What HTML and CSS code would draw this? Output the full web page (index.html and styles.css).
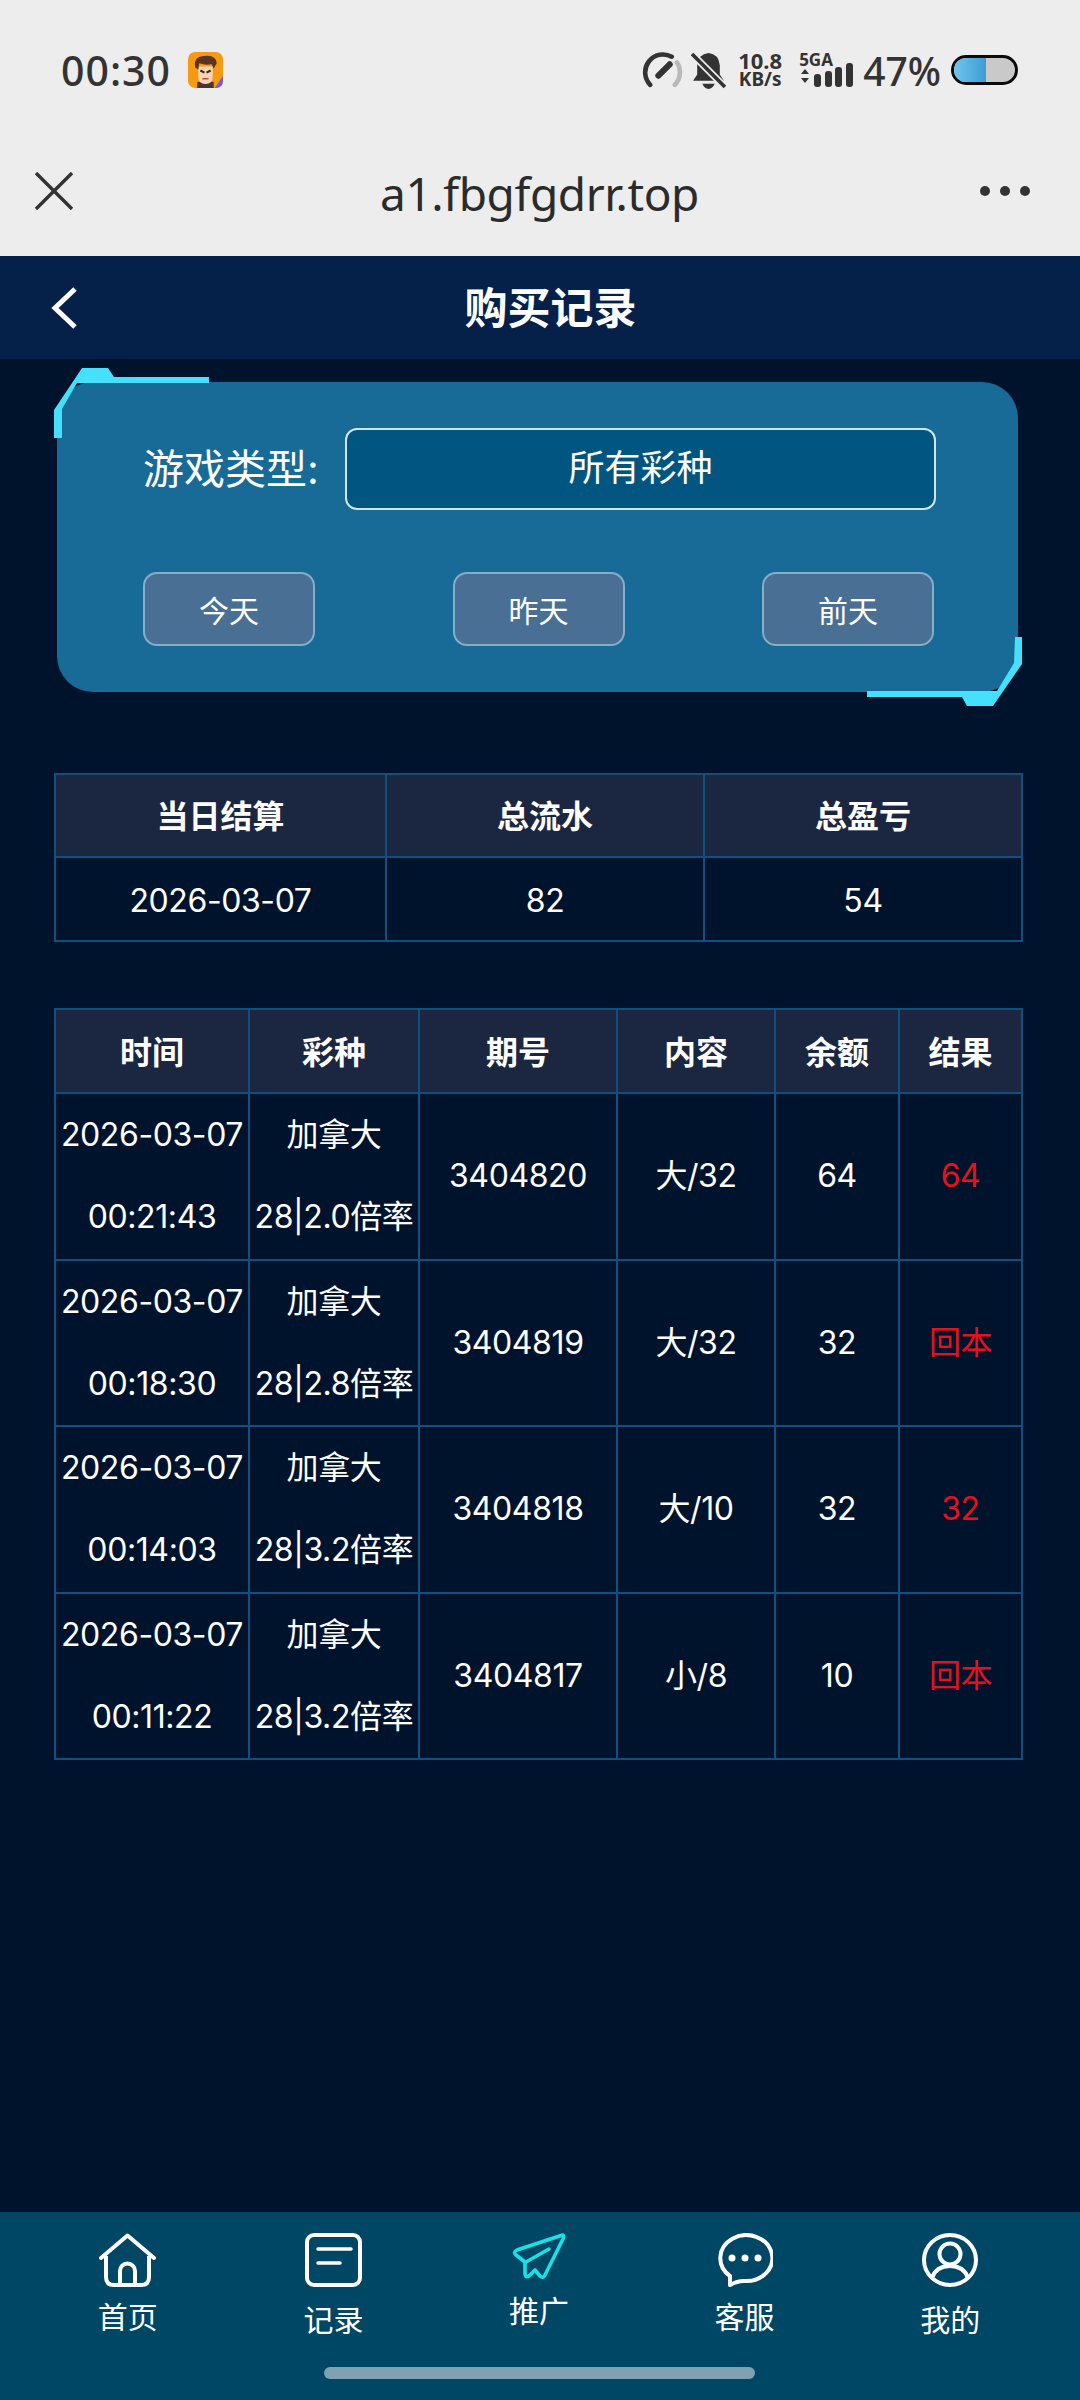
FILE: index.html
```html
<!DOCTYPE html>
<html lang="zh-CN">
<head>
    <meta charset="UTF-8">
    <meta name="viewport" content="width=device-width, initial-scale=1.0">
    <title>购买记录</title>
    <link rel="stylesheet" href="styles.css">
</head>
<body>
    <div class="page">
        <!-- phone status bar -->
        <div class="status-bar">
            <span class="clock">00:30</span>
            <svg class="app-badge" viewBox="0 0 34 35">
                <rect width="34" height="35" rx="7" fill="#f59a12"/>
                <path d="M26 35 L34 23 V28 Q34 35 27 35Z" fill="#7a5bd6"/>
                <path d="M9 35 V29 H25 V35Z" fill="#4a3430"/>
                <path d="M10 14 H24 V24 Q24 31 17 31 Q10 31 10 24Z" fill="#f7d3b5"/>
                <path d="M7 15 Q5 5 15 4 Q27 2 28 11 L25 16 L23 12 Q16 13 11 11 L10 17Z" fill="#5a3524"/>
                <path d="M12 18 L16 20 M22 18 L18 20" stroke="#3a221a" stroke-width="2"/>
                <path d="M14 26 H20" stroke="#a8553f" stroke-width="1.5"/>
            </svg>
            <div class="status-right">
                <svg class="gauge" viewBox="0 0 40 35">
                    <path d="M8 32 A17.5 17.5 0 0 1 29 4.5" fill="none" stroke="#333" stroke-width="4.5" stroke-linecap="round"/>
                    <path d="M34 10 A17.5 17.5 0 0 1 32 32" fill="none" stroke="#b9b9b9" stroke-width="4.5" stroke-linecap="round"/>
                    <path d="M16 23 L27 12" stroke="#333" stroke-width="6" stroke-linecap="round"/>
                </svg>
                <svg class="bell" viewBox="0 0 34 36">
                    <path d="M17 1 Q27 2 28 13 V22 L32 28 H2 L6 22 V13 Q7 2 17 1Z" fill="#333"/>
                    <path d="M11 31 H23 Q21 36 17 36 Q13 36 11 31Z" fill="#333"/>
                    <path d="M1 2 L33 34" stroke="#ededed" stroke-width="7"/>
                    <path d="M1 2 L33 34" stroke="#333" stroke-width="3.5"/>
                </svg>
                <div class="speed"><span>10.8</span><span>KB/s</span></div>
                <div class="signal">
                    <span class="net">5GA</span>
                    <svg viewBox="0 0 54 25" class="bars">
                        <path d="M6 6 L10 11 H2Z M6 20 L2 15 H10Z" fill="#333"/>
                        <rect x="15" y="11" width="7" height="13" rx="3" fill="#333"/>
                        <rect x="26" y="8" width="7" height="16" rx="3" fill="#333"/>
                        <rect x="36" y="4" width="7" height="20" rx="3" fill="#333"/>
                        <rect x="47" y="0" width="7" height="24" rx="3" fill="#333"/>
                    </svg>
                </div>
                <span class="percent">47%</span>
                <div class="battery"><div class="battery-fill"></div></div>
            </div>
        </div>

        <!-- browser bar -->
        <div class="address-bar">
            <svg class="close-icon" viewBox="0 0 38 38">
                <path d="M1 1 L37 37 M37 1 L1 37" stroke="#333" stroke-width="3.4"/>
            </svg>
            <div class="address">a1.fbgfgdrr.top</div>
            <div class="more"><i></i><i></i><i></i></div>
        </div>

        <div class="page-header">
            <svg class="back-icon" viewBox="0 0 26 42">
                <path d="M24 2 L4 21 L24 40" fill="none" stroke="#fff" stroke-width="5"/>
            </svg>
            <h2>购买记录</h2>
        </div>

        <div class="content">
            <div class="filter-card">
                <svg class="corner corner-tl" viewBox="0 0 156 71">
                    <path d="M0 43 L28 1 H54 L60 10 H155 V16 H23 L8 42 V71 H0Z" fill="#45e0fb"/>
                </svg>
                <svg class="corner corner-br" viewBox="0 0 156 70">
                    <path d="M148 0 H155 V27 L126 69 H100 L95 60 H0 V54 H130 L147 26Z" fill="#45e0fb"/>
                </svg>
                <div class="filter-row">
                    <label>游戏类型:</label>
                    <div class="select">所有彩种</div>
                </div>
                <div class="day-buttons">
                    <button>今天</button>
                    <button>昨天</button>
                    <button>前天</button>
                </div>
            </div>

            <table class="summary">
                <tr><th>当日结算</th><th>总流水</th><th>总盈亏</th></tr>
                <tr><td>2026-03-07</td><td>82</td><td>54</td></tr>
            </table>

            <table class="records">
                <tr><th>时间</th><th>彩种</th><th>期号</th><th>内容</th><th>余额</th><th>结果</th></tr>
                <tr>
                    <td>2026-03-07<br>00:21:43</td><td>加拿大<br>28|2.0倍率</td><td>3404820</td><td>大/32</td><td>64</td><td class="result">64</td>
                </tr>
                <tr>
                    <td>2026-03-07<br>00:18:30</td><td>加拿大<br>28|2.8倍率</td><td>3404819</td><td>大/32</td><td>32</td><td class="result">回本</td>
                </tr>
                <tr>
                    <td>2026-03-07<br>00:14:03</td><td>加拿大<br>28|3.2倍率</td><td>3404818</td><td>大/10</td><td>32</td><td class="result">32</td>
                </tr>
                <tr>
                    <td>2026-03-07<br>00:11:22</td><td>加拿大<br>28|3.2倍率</td><td>3404817</td><td>小/8</td><td>10</td><td class="result">回本</td>
                </tr>
            </table>
        </div>

        <div class="tabbar">
            <div class="tabs">
                <div class="tab">
                    <svg class="tab-icon icon-home" viewBox="0 0 57 54">
                        <path d="M2 25 L28.5 2.5 L55 25" fill="none" stroke="#fff" stroke-width="4" stroke-linecap="round" stroke-linejoin="round"/>
                        <path d="M7 23 V44 Q7 52 15 52 H42 Q50 52 50 44 V23" fill="none" stroke="#fff" stroke-width="4"/>
                        <path d="M21 52 V38 A7.5 7.5 0 0 1 36 38 V52" fill="none" stroke="#fff" stroke-width="4"/>
                    </svg>
                    <span>首页</span>
                </div>
                <div class="tab">
                    <svg class="tab-icon icon-record" viewBox="0 0 57 54">
                        <rect x="2" y="2" width="53" height="50" rx="7" fill="none" stroke="#fff" stroke-width="4"/>
                        <path d="M13 16 H46 M13 30 H35" stroke="#fff" stroke-width="3.5" stroke-linecap="round"/>
                    </svg>
                    <span>记录</span>
                </div>
                <div class="tab">
                    <svg class="tab-icon icon-plane" viewBox="0 0 54 47">
                        <path d="M49 2.5 L5 17 Q1 19 4 22 L13 29 L13 41 Q14 46 18 42 L23 37 L28 43 Q31 46 33 42 L51 6 Q53 1 49 2.5Z" fill="none" stroke="#17e2e6" stroke-width="3.6" stroke-linejoin="round"/>
                        <path d="M37 16 L14 29" fill="none" stroke="#17e2e6" stroke-width="3.4" stroke-linecap="round"/>
                    </svg>
                    <span>推广</span>
                </div>
                <div class="tab">
                    <svg class="tab-icon icon-chat" viewBox="0 0 56 54">
                        <path d="M13 52 L13 43 A26 23 0 1 1 27 48 Q20 48 13 52Z" fill="none" stroke="#fff" stroke-width="4" stroke-linejoin="round"/>
                        <circle cx="15" cy="25" r="3.5" fill="#fff"/>
                        <circle cx="28" cy="25" r="3.5" fill="#fff"/>
                        <circle cx="41" cy="25" r="3.5" fill="#fff"/>
                    </svg>
                    <span>客服</span>
                </div>
                <div class="tab">
                    <svg class="tab-icon icon-user" viewBox="0 0 56 54">
                        <ellipse cx="28" cy="27" rx="26" ry="25" fill="none" stroke="#fff" stroke-width="4"/>
                        <circle cx="28" cy="21" r="10.5" fill="none" stroke="#fff" stroke-width="4"/>
                        <path d="M10 45 Q14 33 28 33 Q42 33 46 45" fill="none" stroke="#fff" stroke-width="4"/>
                    </svg>
                    <span>我的</span>
                </div>
            </div>
            <div class="home-indicator"></div>
        </div>
    </div>
</body>
</html>
```

FILE: styles.css
```css
* {
    box-sizing: border-box;
}

body {
    margin: 0;
    font-family: Inter, "Noto Sans CJK SC", sans-serif;
    background-color: #00132c;
    color: #fff;
}

.page {
    display: flex;
    flex-direction: column;
    width: 1080px;
    height: 2400px;
    overflow: hidden;
}

/* status bar */
.status-bar {
    display: flex;
    align-items: center;
    height: 140px;
    padding: 0 62px 0 61px;
    background-color: #ededed;
    color: #333;
}

.clock {
    font-family: "Noto Sans", sans-serif;
    font-size: 41px;
    font-weight: 500;
    letter-spacing: 1px;
}

.app-badge {
    width: 35px;
    height: 36px;
    margin-left: 17px;
}

.status-right {
    display: flex;
    align-items: center;
    margin-left: auto;
}

.gauge {
    width: 41px;
    height: 36px;
}

.bell {
    width: 35px;
    height: 37px;
    margin-left: 8px;
}

.speed {
    display: flex;
    flex-direction: column;
    align-items: center;
    margin-left: 12px;
    font-family: "Noto Sans", sans-serif;
    font-weight: 700;
    font-size: 22px;
    line-height: 19px;
}

.speed span:last-child {
    font-size: 19px;
}

.signal {
    display: flex;
    flex-direction: column;
    margin-left: 17px;
}

.net {
    font-family: "Noto Sans", sans-serif;
    font-size: 17px;
    font-weight: 700;
    line-height: 15px;
}

.bars {
    width: 54px;
    height: 25px;
    margin-top: -4px;
}

.percent {
    margin-left: 10px;
    font-family: "Noto Sans", sans-serif;
    font-size: 39px;
    font-weight: 500;
}

.battery {
    position: relative;
    width: 67px;
    height: 30px;
    margin-left: 10px;
    border: 3px solid #0a0a0a;
    border-radius: 15px;
    background-color: #c9c9c9;
    overflow: hidden;
}

.battery-fill {
    width: 53%;
    height: 100%;
    background: linear-gradient(90deg, #72c4ee, #3c9dd3);
}

/* browser bar */
.address-bar {
    display: flex;
    align-items: center;
    height: 116px;
    padding: 0 50px 14px 35px;
    background-color: #ededed;
    color: #2b2b2b;
}

.close-icon {
    width: 38px;
    height: 38px;
    margin-right: 26px;
}

.address {
    flex: 1;
    margin-top: 3px;
    text-align: center;
    font-family: "Noto Sans", sans-serif;
    font-size: 46px;
    letter-spacing: -0.4px;
}

.more {
    display: flex;
    gap: 10px;
}

.more i {
    width: 10px;
    height: 10px;
    border-radius: 50%;
    background-color: #333;
}

/* page header */
.page-header {
    display: flex;
    align-items: center;
    height: 103px;
    padding: 0 56px 0 51px;
    background-color: #05214a;
}

.back-icon {
    width: 26px;
    height: 42px;
}

.page-header h2 {
    flex: 1;
    margin: 0;
    padding-bottom: 6px;
    text-align: center;
    font-size: 43px;
    font-weight: 700;
}

.content {
    flex: 1;
    padding: 23px 57px 0 54px;
}

/* filter card */
.filter-card {
    position: relative;
    width: 961px;
    height: 310px;
    margin-left: 3px;
    padding: 46px 82px 0 86px;
    background-color: #186b96;
    border-radius: 36px;
}

.corner {
    position: absolute;
    width: 156px;
}

.corner-tl {
    left: -3px;
    top: -15px;
    height: 71px;
}

.corner-br {
    right: -5px;
    bottom: -15px;
    height: 70px;
}

.filter-row {
    display: flex;
    align-items: center;
}

.filter-row label {
    width: 202px;
    padding-bottom: 6px;
    font-size: 41px;
    white-space: nowrap;
}

.select {
    flex: 1;
    height: 82px;
    line-height: 76px;
    text-align: center;
    font-size: 36px;
    background-color: #005680;
    border: 2px solid #cfe6f2;
    border-radius: 12px;
}

.day-buttons {
    display: flex;
    justify-content: space-between;
    margin-top: 62px;
    padding-right: 2px;
}

.day-buttons button {
    width: 172px;
    height: 74px;
    color: #fff;
    font-family: inherit;
    font-size: 30px;
    background-color: #4a6f94;
    border: 2px solid #84aeca;
    border-radius: 14px;
}

/* tables */
table {
    width: 969px;
    border-collapse: collapse;
    table-layout: fixed;
    font-size: 32px;
    letter-spacing: -0.4px;
    text-align: center;
}

th, td {
    padding: 0;
    border: 2px solid #10507c;
    white-space: nowrap;
}

th {
    height: 84px;
    padding-bottom: 3px;
    font-size: 32px;
    letter-spacing: 0;
    font-weight: 700;
    background-color: #1b2640;
}

.summary {
    margin-top: 81px;
}

.summary th {
    height: 83px;
}

.summary td {
    height: 84px;
    padding-top: 2px;
}

.summary th:nth-child(1) {
    width: 331px;
}

.summary th:nth-child(2) {
    width: 318px;
}

.records {
    margin-top: 66px;
}

.records td {
    height: 166.5px;
    line-height: 82px;
}

.records th:nth-child(1) {
    width: 194px;
}

.records th:nth-child(2) {
    width: 170px;
}

.records th:nth-child(3) {
    width: 198px;
}

.records th:nth-child(4) {
    width: 158px;
}

.records th:nth-child(5) {
    width: 124px;
}

.result {
    color: #e8101c;
}

/* bottom tabs */
.tabbar {
    height: 188px;
    padding: 21px 27px 0 25px;
    background-color: #004766;
}

.tabs {
    display: flex;
    height: 134px;
}

.tab {
    display: flex;
    flex: 1;
    flex-direction: column;
    align-items: center;
    font-size: 30px;
    line-height: 36px;
}

.tab-icon {
    display: block;
    margin-bottom: 12px;
}

.icon-home {
    width: 57px;
    height: 54px;
}

.icon-record {
    width: 57px;
    height: 54px;
    margin-bottom: 15px;
}

.icon-plane {
    width: 54px;
    height: 47px;
    margin-bottom: 13px;
}

.icon-chat {
    width: 56px;
    height: 54px;
}

.icon-user {
    width: 56px;
    height: 54px;
    margin-bottom: 15px;
}

.home-indicator {
    width: 431px;
    height: 12px;
    margin: 0 auto;
    border-radius: 6px;
    background-color: #7fa2b2;
}
```
